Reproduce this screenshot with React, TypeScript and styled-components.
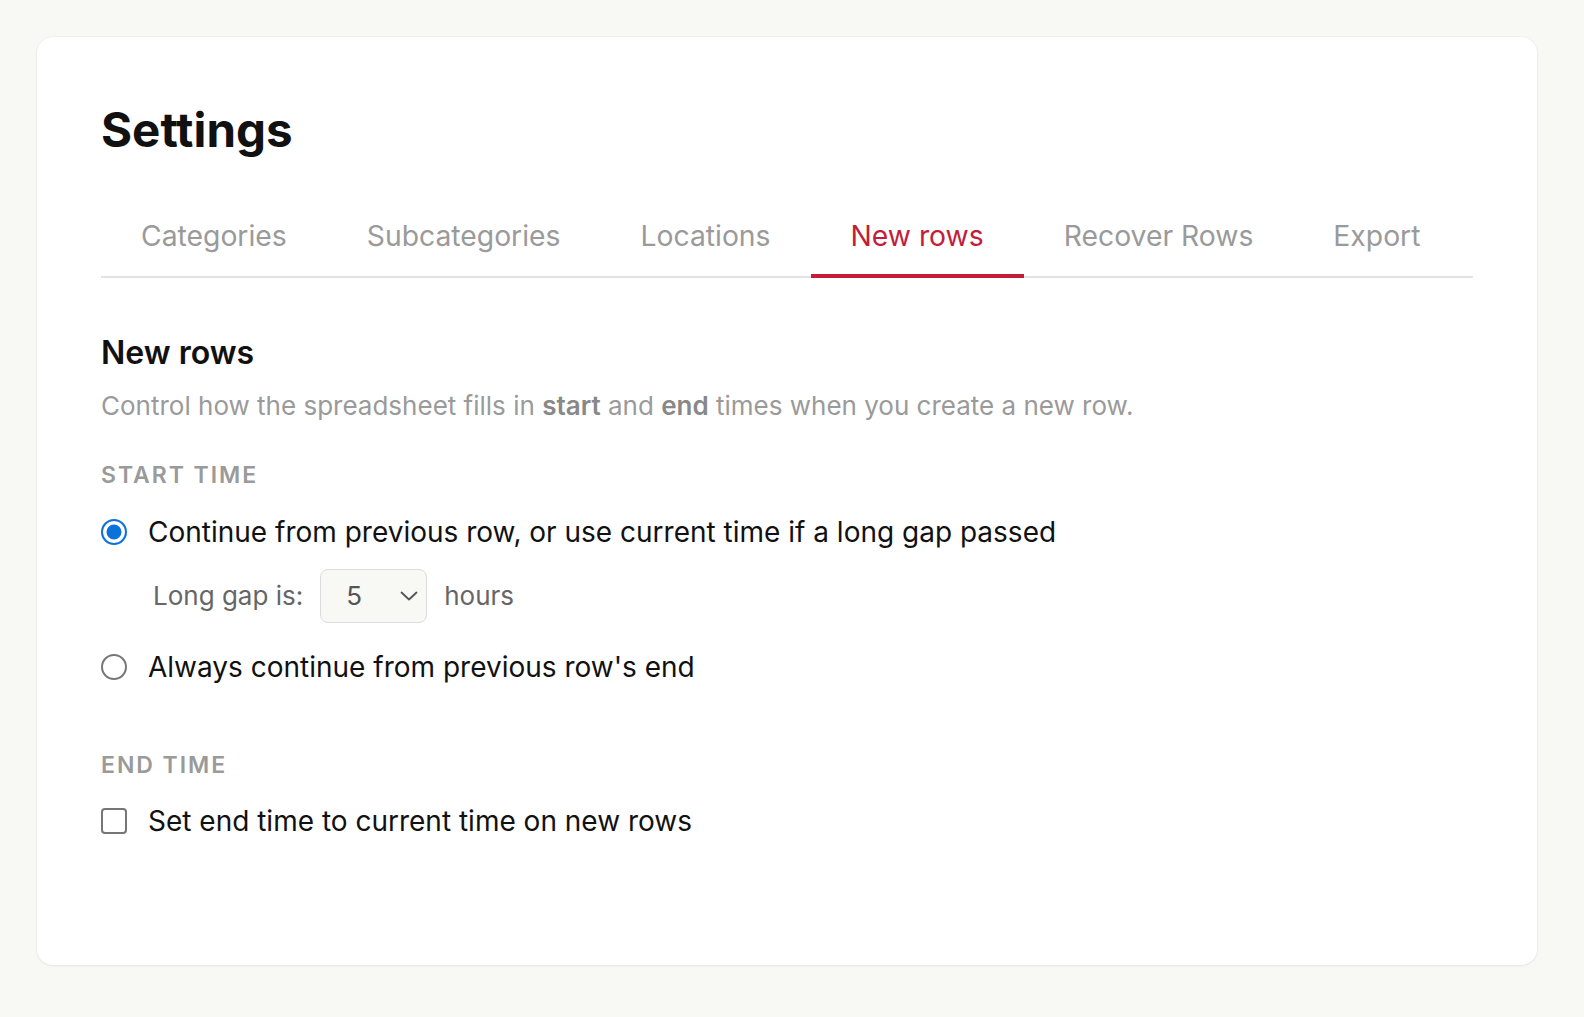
import * as React from 'react';
import styled, { createGlobalStyle } from 'styled-components';

const GlobalStyle = createGlobalStyle`
    html, body {
        margin: 0;
        padding: 0;
        background: #f8f8f5;
    }
    body {
        font-family: Inter, "Noto Sans", "Liberation Sans", sans-serif;
        -webkit-font-smoothing: antialiased;
    }
    * {
        box-sizing: border-box;
    }
`;

const Page = styled.div`
    min-height: 100vh;
    padding: 37px 47px 52px 37px;
    background: #f8f8f5;
`;

const Card = styled.main`
    width: 1500px;
    min-height: 928px;
    padding: 64px;
    background: #ffffff;
    border-radius: 16px;
    box-shadow: 0 1px 3px rgba(0, 0, 0, 0.06), 0 0 0 1px rgba(0, 0, 0, 0.025);
`;

const Title = styled.h1`
    margin: 0 0 41px;
    font-size: 47.5px;
    line-height: 1.2;
    font-weight: 700;
    color: #111111;
`;

const TabBar = styled.nav`
    display: flex;
    border-bottom: 2px solid #e2e2e2;
`;

const Tab = styled.button<{ active?: boolean }>`
    margin: 0 0 -2px;
    padding: 16px 40px;
    border: none;
    border-bottom: 4px solid ${(props) => (props.active ? '#c41d3a' : 'transparent')};
    background: none;
    font-family: inherit;
    font-size: 28.3px;
    line-height: 1.52;
    font-weight: 400;
    color: ${(props) => (props.active ? '#c41d3a' : '#9a9a9a')};
    cursor: pointer;
`;

const Panel = styled.section`
    padding-top: 56px;
`;

const SectionTitle = styled.h2`
    margin: 0;
    font-size: 32px;
    line-height: 1.2;
    font-weight: 600;
    color: #111111;
`;

const Description = styled.p`
    margin: 14px 0 0;
    font-size: 26px;
    line-height: 1.5;
    color: #9a9a9a;

    & strong {
        font-weight: 600;
        color: #888888;
    }
`;

const GroupLabel = styled.h3<{ spacing: number }>`
    margin: ${(props) => props.spacing}px 0 0;
    font-size: 23px;
    line-height: 1.2;
    font-weight: 600;
    letter-spacing: 0.085em;
    text-transform: uppercase;
    color: #9a9a9a;
`;

const OptionRow = styled.label<{ spacing: number }>`
    display: flex;
    align-items: center;
    gap: 21px;
    margin-top: ${(props) => props.spacing}px;
    font-size: 28px;
    line-height: 1.5;
    color: #111111;
    cursor: pointer;
`;

const Radio = styled.input.attrs({ type: 'radio' })`
    appearance: none;
    flex: none;
    width: 26px;
    height: 26px;
    margin: 0;
    border-radius: 50%;
    border: 2px solid #767676;
    background: #ffffff;

    &:checked {
        border-color: #0b72da;
        box-shadow: inset 0 0 0 3.5px #ffffff, inset 0 0 0 12px #0b72da;
    }
`;

const Checkbox = styled.input.attrs({ type: 'checkbox' })`
    appearance: none;
    flex: none;
    width: 26px;
    height: 26px;
    margin: 0;
    border-radius: 4px;
    border: 2px solid #767676;
    background: #ffffff;
`;

const SubRow = styled.div`
    display: flex;
    align-items: center;
    gap: 17px;
    margin-top: 16px;
    padding-left: 52px;
    font-size: 26px;
    line-height: 1.5;
    color: #666666;
`;

const SelectBox = styled.div`
    position: relative;
    display: flex;
    align-items: center;
    width: 107px;
    height: 54px;
    padding-left: 25px;
    border: 1.5px solid #dcdcdc;
    border-radius: 8px;
    background: #f8f8f5;
    font-size: 26px;
    color: #555555;
`;

const Chevron = styled.svg`
    position: absolute;
    right: 8px;
    top: 50%;
    transform: translateY(-50%);
`;

const tabs = ['Categories', 'Subcategories', 'Locations', 'New rows', 'Recover Rows', 'Export'];

const App: React.FC = () => {
    const [startMode, setStartMode] = React.useState<'gap' | 'always'>('gap');
    const [endNow, setEndNow] = React.useState(false);

    return (
        <Page>
            <GlobalStyle />
            <Card>
                <Title>Settings</Title>
                <TabBar>
                    {tabs.map((tab) => (
                        <Tab key={tab} active={tab === 'New rows'} type="button">
                            {tab}
                        </Tab>
                    ))}
                </TabBar>
                <Panel>
                    <SectionTitle>New rows</SectionTitle>
                    <Description>
                        Control how the spreadsheet fills in <strong>start</strong> and <strong>end</strong> times when
                        you create a new row.
                    </Description>

                    <GroupLabel spacing={37}>Start time</GroupLabel>
                    <OptionRow spacing={21}>
                        <Radio name="start" checked={startMode === 'gap'} onChange={() => setStartMode('gap')} />
                        Continue from previous row, or use current time if a long gap passed
                    </OptionRow>
                    <SubRow>
                        <span>Long gap is:</span>
                        <SelectBox>
                            5
                            <Chevron width="18" height="10" viewBox="0 0 18 10" fill="none">
                                <path d="M1.5 1.5 L9 8.5 L16.5 1.5" stroke="#555" strokeWidth="1.8" strokeLinecap="round" strokeLinejoin="round" />
                            </Chevron>
                        </SelectBox>
                        <span>hours</span>
                    </SubRow>
                    <OptionRow spacing={23}>
                        <Radio name="start" checked={startMode === 'always'} onChange={() => setStartMode('always')} />
                        Always continue from previous row's end
                    </OptionRow>

                    <GroupLabel spacing={64}>End time</GroupLabel>
                    <OptionRow spacing={20}>
                        <Checkbox checked={endNow} onChange={() => setEndNow(!endNow)} />
                        Set end time to current time on new rows
                    </OptionRow>
                </Panel>
            </Card>
        </Page>
    );
};

export default App;
